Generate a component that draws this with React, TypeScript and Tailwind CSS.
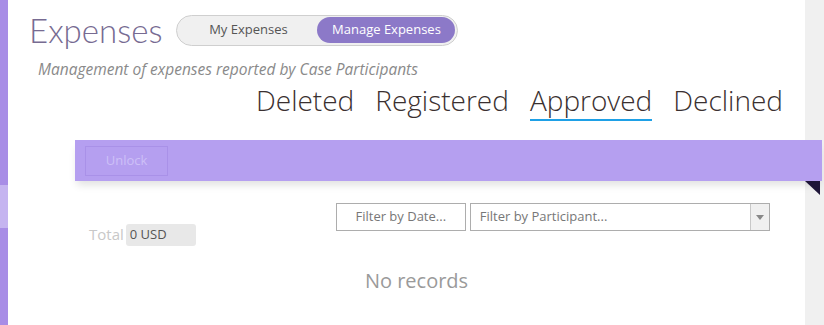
import React from 'react';

const tabs = ['Deleted', 'Registered', 'Approved', 'Declined'];

export default function App() {
  const active = 'Approved';

  return (
    <div
      className="flex h-[325px] w-[824px] overflow-hidden bg-white"
      style={{ fontFamily: '"Open Sans", "Noto Sans", sans-serif' }}
    >
      {/* Left nav strip */}
      <div className="flex w-[8px] flex-col">
        <div className="h-[185px] bg-[#a88de6]" />
        <div className="h-[43px] bg-[#c5b4f0]" />
        <div className="flex-1 bg-[#a88de6]" />
      </div>

      {/* Main */}
      <div className="relative z-10 flex flex-1 flex-col">
        {/* Header */}
        <div className="flex items-center pl-[21px] pt-[9px]">
          <h1 className="font-['Lato',sans-serif] text-[33px] font-light leading-[42px] text-[#776b92]">Expenses</h1>
          <div className="ml-[14px] flex h-[31px] items-center rounded-full border border-[#cfcfcf] bg-[#f0f0f0] px-[2px]">
            <button className="w-[138px] text-[13px] text-[#555]">My Expenses</button>
            <button className="h-[26px] w-[138px] rounded-full bg-[#8c79c8] text-[13px] text-white">
              Manage Expenses
            </button>
          </div>
        </div>

        <p className="ml-[30px] mt-[9px] text-[15.5px] italic leading-[18px] text-[#8a8a8a]">
          Management of expenses reported by Case Participants
        </p>

        {/* Tabs */}
        <div className="mr-[22px] mt-[4px] flex justify-end gap-[21px]">
          {tabs.map((t) => (
            <div
              key={t}
              className={`pb-[1px] text-[28px] font-light leading-[36px] text-[#3a3030] ${
                t === active ? 'border-b-2 border-[#1ea0e6]' : 'border-b-2 border-transparent'
              }`}
            >
              {t}
            </div>
          ))}
        </div>

        {/* Ribbon */}
        <div className="relative ml-[67px] mr-[-17px] mt-[19px] flex h-[41px] items-center bg-[#b59ff0] pl-[10px] shadow-[0_6px_8px_-2px_rgba(0,0,0,0.12)]">
          <button className="h-[30px] w-[83px] border border-[#a991e8] text-[13px] text-[#cdbff7]">Unlock</button>
          <div className="absolute right-[2px] top-[41px] h-0 w-0 border-l-[15px] border-t-[14px] border-l-transparent border-t-[#1e1538]" />
        </div>

        {/* Filters + total */}
        <div className="ml-[81px] mt-[22px] flex">
          <div className="flex items-end pb-[1px]">
            <span className="mt-[20px] text-[15px] text-[#c8c8c8]">Total</span>
            <span className="ml-[2px] flex h-[22px] w-[70px] items-center rounded-[3px] bg-[#e8e8e8] px-[4px] text-[13px] text-[#555]">
              0 USD
            </span>
          </div>
          <div className="ml-[140px] flex h-[28px] gap-[4px]">
            <button className="w-[130px] border border-[#adadad] text-[13px] text-[#777]">Filter by Date...</button>
            <div className="flex w-[300px] border border-[#adadad]">
              <span className="flex flex-1 items-center pl-[9px] text-[13px] text-[#777]">Filter by Participant...</span>
              <span className="flex w-[19px] items-center justify-center border-l border-[#c8c8c8] bg-[#f0f0f0]">
                <svg width="8" height="5" viewBox="0 0 8 5">
                  <path d="M0 0h8L4 5z" fill="#888" />
                </svg>
              </span>
            </div>
          </div>
        </div>

        <div className="mt-[19px] pl-[20px] text-center text-[20px] text-[#9a9a9a]">No records</div>
      </div>

      {/* Right gutter */}
      <div className="w-[19px] bg-[#f0f0f0]" />
    </div>
  );
}
